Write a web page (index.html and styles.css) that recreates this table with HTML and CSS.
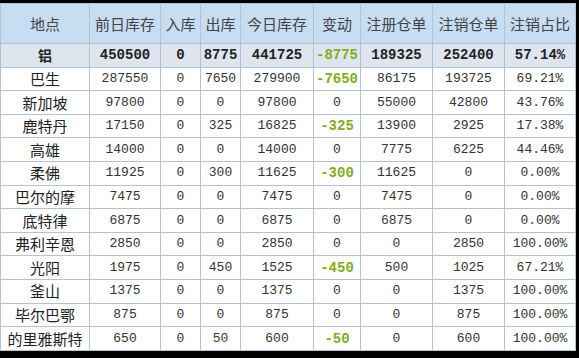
FILE: index.html
```html
<!DOCTYPE html>
<html lang="zh">
<head>
<meta charset="utf-8">
<link rel="stylesheet" href="styles.css">
</head>
<body>
<div class="frame">
<table class="stock">
<colgroup>
<col class="c1"><col class="c2"><col class="c3"><col class="c4"><col class="c5"><col class="c6"><col class="c7"><col class="c8"><col class="c9">
</colgroup>
<thead>
<tr><th>地点</th><th>前日库存</th><th>入库</th><th>出库</th><th>今日库存</th><th>变动</th><th>注册仓单</th><th>注销仓单</th><th>注销占比</th></tr>
</thead>
<tbody>
<tr class="total"><td class="name">铝</td><td>450500</td><td>0</td><td>8775</td><td>441725</td><td class="neg">-8775</td><td>189325</td><td>252400</td><td>57.14%</td></tr>
<tr><td class="name">巴生</td><td>287550</td><td>0</td><td>7650</td><td>279900</td><td class="neg">-7650</td><td>86175</td><td>193725</td><td>69.21%</td></tr>
<tr><td class="name">新加坡</td><td>97800</td><td>0</td><td>0</td><td>97800</td><td>0</td><td>55000</td><td>42800</td><td>43.76%</td></tr>
<tr><td class="name">鹿特丹</td><td>17150</td><td>0</td><td>325</td><td>16825</td><td class="neg">-325</td><td>13900</td><td>2925</td><td>17.38%</td></tr>
<tr><td class="name">高雄</td><td>14000</td><td>0</td><td>0</td><td>14000</td><td>0</td><td>7775</td><td>6225</td><td>44.46%</td></tr>
<tr><td class="name">柔佛</td><td>11925</td><td>0</td><td>300</td><td>11625</td><td class="neg">-300</td><td>11625</td><td>0</td><td>0.00%</td></tr>
<tr><td class="name">巴尔的摩</td><td>7475</td><td>0</td><td>0</td><td>7475</td><td>0</td><td>7475</td><td>0</td><td>0.00%</td></tr>
<tr><td class="name">底特律</td><td>6875</td><td>0</td><td>0</td><td>6875</td><td>0</td><td>6875</td><td>0</td><td>0.00%</td></tr>
<tr><td class="name">弗利辛恩</td><td>2850</td><td>0</td><td>0</td><td>2850</td><td>0</td><td>0</td><td>2850</td><td>100.00%</td></tr>
<tr><td class="name">光阳</td><td>1975</td><td>0</td><td>450</td><td>1525</td><td class="neg">-450</td><td>500</td><td>1025</td><td>67.21%</td></tr>
<tr><td class="name">釜山</td><td>1375</td><td>0</td><td>0</td><td>1375</td><td>0</td><td>0</td><td>1375</td><td>100.00%</td></tr>
<tr><td class="name">毕尔巴鄂</td><td>875</td><td>0</td><td>0</td><td>875</td><td>0</td><td>0</td><td>875</td><td>100.00%</td></tr>
<tr><td class="name">的里雅斯特</td><td>650</td><td>0</td><td>50</td><td>600</td><td class="neg">-50</td><td>0</td><td>600</td><td>100.00%</td></tr>
</tbody>
</table>
</div>
</body>
</html>
```
FILE: styles.css
```css
html, body {
  margin: 0;
  padding: 0;
  background: #000;
  width: 579px;
  height: 358px;
  overflow: hidden;
}
.frame {
  padding-top: 3px;
  width: 575px;
}
.stock {
  border-collapse: collapse;
  table-layout: fixed;
  width: 575px;
  background: #fff;
  font-family: "Liberation Mono", "Noto Sans CJK SC", monospace;
  font-size: 13px;
  color: #333;
}
.c1 { width: 89px; }
.c2 { width: 71px; }
.c3 { width: 40px; }
.c4 { width: 40px; }
.c5 { width: 73px; }
.c6 { width: 47px; }
.c7 { width: 72px; }
.c8 { width: 72px; }
.c9 { width: 71px; }
.stock th, .stock td {
  border: 1px solid #b3c3d5;
  padding: 0;
  text-align: center;
  white-space: nowrap;
  overflow: hidden;
}
.stock th {
  height: 39px;
  background: #c7ddf1;
  color: #444;
  font-family: "Noto Sans CJK SC", sans-serif;
  font-size: 15px;
  font-weight: normal;
}
.stock td {
  height: 22.62px;
  line-height: 16px;
}
.stock td.name {
  font-family: "Noto Sans CJK SC", sans-serif;
  font-size: 15px;
  color: #222;
}
.stock tr.total td {
  background: #dfe5ee;
  font-weight: bold;
  font-size: 14px;
  color: #222;
}
.stock tr td.neg {
  color: #7fae1a;
  font-weight: bold;
  font-size: 14px;
}
```
